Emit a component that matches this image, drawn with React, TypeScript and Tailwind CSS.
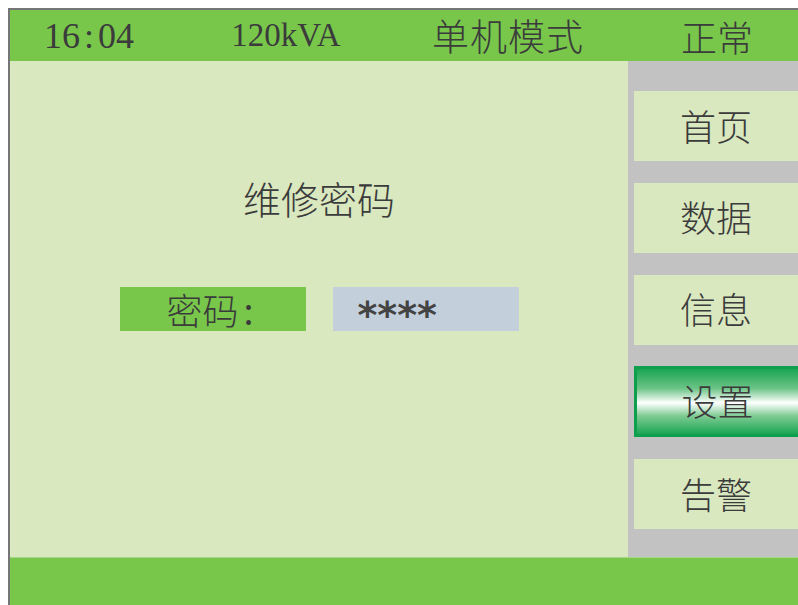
import React from "react";

const CJK = "font-['Liberation_Serif','Noto_Sans_CJK_SC',serif]";

// 等宽半角字符：每个字符占固定宽度，模拟面板字体
function MonoText({ text, cell }: { text: string; cell: string }) {
  return (
    <span className="inline-flex">
      {text.split("").map((ch, i) => (
        <span key={i} className={`${cell} inline-block text-center`}>
          {ch}
        </span>
      ))}
    </span>
  );
}

const menu = ["首页", "数据", "信息", "设置", "告警"];

export default function App() {
  return (
    <div className="w-[798px] h-[605px] bg-white pt-[8px] pl-[8px] overflow-hidden">
      <div
        className={`${CJK} w-full h-full flex flex-col border-t-2 border-l-2 border-[#767676] text-[#3b3b3b]`}
      >
        {/* 顶部状态栏 */}
        <header className="h-[51px] bg-[#78c74b] flex items-center text-[36px] leading-none">
          <div className="w-[158px] flex justify-center">
            <MonoText text="16:04" cell="w-[18px]" />
          </div>
          <div className="w-[236px] flex justify-center text-[33px]">
            120kVA
          </div>
          <div className="w-[208px] flex justify-center font-['Noto_Sans_CJK_SC',sans-serif] font-light text-[37px] tracking-[1px]">
            单机模式
          </div>
          <div className="flex-1 flex justify-center pl-[24px] font-['Noto_Sans_CJK_SC',sans-serif] font-light text-[36px]">
            正常
          </div>
        </header>

        <div className="flex-1 flex min-h-0">
          {/* 主区域 */}
          <main className="flex-1 bg-[#d9e8bf] flex flex-col items-center font-['Noto_Sans_CJK_SC',sans-serif] font-light">
            <div className="mt-[115px] h-[44px] leading-[44px] text-[38px]">
              维修密码
            </div>
            <div className="mt-[67px] flex gap-[27px]">
              <div className="w-[186px] h-[44px] bg-[#78c74b] flex items-center justify-center text-[36px] leading-none">
                密码<span className="w-[20px] text-center font-normal">:</span>
              </div>
              <div className="w-[186px] h-[44px] bg-[#c3d0dc] flex items-center pl-[25px] text-[38px] leading-none font-['DejaVu_Sans',sans-serif] font-bold text-[#444444]">
                <span className="translate-y-[6px]">****</span>
              </div>
            </div>
          </main>

          {/* 右侧菜单 */}
          <aside className="w-[170px] bg-[#c3c2c2] pt-[30px] pl-[6px] flex flex-col gap-[21.75px]">
            {menu.map((m) =>
              m === "设置" ? (
                <div
                  key={m}
                  className="h-[71px] border-[3px] border-r-0 border-[#0d9f4c] bg-[linear-gradient(to_bottom,#1aa553_0%,#6cc487_30%,#ffffff_52%,#7fcb93_72%,#1aa553_100%)] flex items-center justify-center pb-[3px] text-[36px] leading-none font-['Noto_Sans_CJK_SC',sans-serif] font-light"
                >
                  {m}
                </div>
              ) : (
                <div
                  key={m}
                  className="h-[70px] bg-[#d9e8bf] flex items-center justify-center pb-[3px] text-[36px] leading-none font-['Noto_Sans_CJK_SC',sans-serif] font-light"
                >
                  {m}
                </div>
              )
            )}
          </aside>
        </div>

        {/* 底部栏 */}
        <footer className="h-[48px] bg-[#78c74b] border-t border-[#a4d78a]" />
      </div>
    </div>
  );
}
